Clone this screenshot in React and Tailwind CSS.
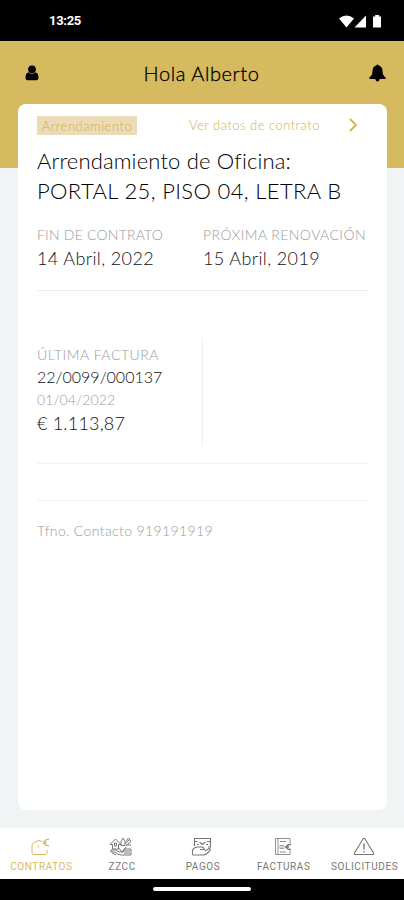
import clsx from 'clsx';

const UserIcon = () => (
    <svg width="14" height="16" viewBox="0 0 14 16" fill="currentColor">
        <circle cx="7" cy="4.300" r="3.900" />
        <path d="M3.500 7.200Q7 10.500 10.500 7.200 13.500 8 13.500 13q0 2.300-2.200 2.300H2.700Q.5 15.300.5 13 .5 8 3.500 7.200z" />
    </svg>
);

const BellIcon = () => (
    <svg width="17" height="18" viewBox="0 0 17 18" fill="currentColor">
        <path d="M7.200 1.500q1.300-2 2.600 0Q13.500 2.700 13.500 7q0 4.500 3.200 6.500.3 1.500-1 1.500h-5q-.4 2.500-2.200 2.500T6.300 15h-5q-1.300 0-1-1.500Q3.500 11.500 3.500 7q0-4.300 3.700-5.500z" />
    </svg>
);

const HouseIcon = () => (
    <svg width="22" height="20" viewBox="0 0 22 20" fill="none" stroke="currentColor" strokeWidth="1">
        <path d="M13 4.500Q10 2.500 7 4.500L3 7.500V15.500q0 2 2 2h11q2 0 2-2V13" />
        <path d="M9.500 8.500v2" />
        <path d="M20 2.500q-4-1-4.500 3 .5 4 4.500 3M14 4.700h3.500M14 6.500h3.500" strokeWidth="1.300" />
    </svg>
);

const CommunityIcon = () => (
    <svg width="22" height="20" viewBox="0 0 22 20" fill="none" stroke="currentColor" strokeWidth="1">
        <path d="M0 7.500 5.500 2 11 7.500H8.500V12h-6V7.500zM4.500 6h2v3h-2z" />
        <path d="M11 4.500 13 1l2 3.500v4h-4zM16 4.500 18.500 1 21 4.500l-5 4M15 7l5-5M17 8h4" />
        <path d="M1 13h5l3 2h4l1-3h7v6h-9q-5 0-7-3H1zM8 10l4 5 4-5M13 14h7M14 16h6M2 16l4 2" />
    </svg>
);

const PaymentIcon = () => (
    <svg width="22" height="20" viewBox="0 0 22 20" fill="none" stroke="currentColor" strokeWidth="1.100">
        <path d="M3.500 9V1.500h16V10H17M3.500 4.500h3M16 4.500h3" />
        <path d="M8.500 5l3 2.500 3-2.500M6 7.500h2M15 7.500h2" />
        <path d="M1.500 17.500V13q2-3 5-3h4q2.500 0 3 2.500H9M14 14l4-2.500q2 0 1 2l-3 3q-2 1.500-4 1.500H1.500" />
    </svg>
);

const InvoiceIcon = () => (
    <svg width="22" height="20" viewBox="0 0 22 20" fill="none" stroke="currentColor" strokeWidth="1">
        <path d="M18 6V1.500H3.500v16H18V14M6 1.500v16M8 4.500h6M8 15h6" strokeOpacity=".8" />
        <path d="M8 8.500h4v3H8zM10 8v4" strokeOpacity=".6" />
        <path d="M19 7.500q-4-.5-4.500 2.500.5 3 4.500 2.500M13 10h4" strokeWidth="1.400" />
    </svg>
);

const WarningIcon = () => (
    <svg width="22" height="20" viewBox="0 0 22 20" fill="none" stroke="currentColor" strokeWidth="1.100">
        <path d="M10 2q1-1.500 2 0l8.500 14q.5 1.500-1 1.500h-17q-1.500 0-1-1.500z" />
        <path d="M11 6.500v6M11 14v1.500" strokeWidth="1.400" />
    </svg>
);

const tabs = [
    { label: 'CONTRATOS', Icon: HouseIcon },
    { label: 'ZZCC', Icon: CommunityIcon },
    { label: 'PAGOS', Icon: PaymentIcon },
    { label: 'FACTURAS', Icon: InvoiceIcon },
    { label: 'SOLICITUDES', Icon: WarningIcon },
];

const StatusBar = () => (
    <div className="flex h-[41px] shrink-0 items-center justify-between bg-black pl-[49px] pr-[22px] text-white">
        <span className="font-['Roboto',sans-serif] text-[13px] font-bold leading-4 tracking-[-0.300px]">13:25</span>
        <svg width="43" height="14" viewBox="0 0 43 14" fill="currentColor">
            <path d="M0 4.500Q7.500-1.500 15 4.500L7.500 13.500z" />
            <path d="M27 1.500v12H15.500z" />
            <path d="M34 2.500h2.200V1h4v1.500h1.800v11h-8z" />
        </svg>
    </div>
);

const Field = ({ label, value, labelClass, valueClass = 'text-[18px] leading-6 tracking-[0.380px]' }) => (
    <div>
        <div className={clsx('text-[14px] leading-[23px] text-[#999999]', labelClass)}>{label}</div>
        <div className={valueClass}>{value}</div>
    </div>
);

const ContractCard = () => (
    <section className="ml-[18px] mr-[17px] h-[706px] rounded-lg bg-white px-[19px] pt-[11px]">
        <div className="flex h-5 items-center text-[13px] leading-5 text-[#d4b04c]">
            <span className="h-[19px] w-[100px] bg-[#ecdbb9] text-center leading-5 tracking-[0.550px]">Arrendamiento</span>
            <span className="ml-[52px] w-[132px] whitespace-nowrap tracking-[0.470px]">Ver datos de contrato</span>
            <svg className="ml-[28px]" width="8" height="14" viewBox="0 0 8 14" fill="none" stroke="currentColor" strokeWidth="1.800">
                <path d="m1 1 6 6-6 6" />
            </svg>
        </div>
        <h2 className="mt-[11px] whitespace-nowrap text-[22px] leading-[30px] text-black">
            <div className="tracking-[0.160px]">Arrendamiento de Oficina:</div>
            <div className="tracking-[0.360px]">PORTAL 25, PISO 04, LETRA B</div>
        </h2>
        <div className="mt-[17px] flex h-[68px] whitespace-nowrap border-b border-[#eeeeee]">
            <div className="w-[166px]">
                <Field label="FIN DE CONTRATO" value="14 Abril, 2022" labelClass="tracking-[0.220px]" />
            </div>
            <Field label="PRÓXIMA RENOVACIÓN" value="15 Abril, 2019" labelClass="tracking-[0.440px]" />
        </div>
        <div className="flex h-[173px] border-b border-[#f2f2f2] pt-[47px]">
            <div className="h-[108px] w-[166px] border-r border-[#eeeeee] pt-[5px]">
                <Field
                    label="ÚLTIMA FACTURA"
                    value="22/0099/000137"
                    labelClass="tracking-[0.550px]"
                    valueClass="text-[16px] leading-[22px]"
                />
                <Field
                    label="01/04/2022"
                    value="€ 1.113,87"
                    labelClass="tracking-[0.100px]"
                    valueClass="text-[18px] leading-6 tracking-[0.200px]"
                />
            </div>
        </div>
        <div className="h-[37px] border-b border-[#f2f2f2]" />
        <p className="mt-5 text-[14px] leading-5 tracking-[0.370px] text-[#999999]">Tfno. Contacto 919191919</p>
    </section>
);

const TabBar = () => (
    <nav className="grid h-[51px] shrink-0 grid-cols-5 bg-white">
        {tabs.map(({ label, Icon }, i) => (
            <div
                key={label}
                className={clsx('flex flex-col items-center pt-[9px]', i === 0 ? 'text-[#d9b85b]' : 'text-[#777777]')}
            >
                <Icon />
                <span className="mt-1 pl-[2px] font-['Roboto',sans-serif] text-[10px] font-normal leading-3 tracking-[0.600px]">
                    {label}
                </span>
            </div>
        ))}
    </nav>
);

const App = () => {
    return (
        <div className="flex h-[900px] w-[404px] flex-col overflow-hidden bg-[#f1f4f5] font-['Lato',sans-serif] font-light text-[#111111]">
            <StatusBar />
            <main className="flex-1 bg-linear-to-b from-[#d6ba60] from-[127px] to-[#f1f4f5] to-[127px]">
                <header className="flex h-[63px] items-center justify-between pl-[25px] pr-[18px] text-black">
                    <UserIcon />
                    <h1 className="mr-[5px] text-[20px] tracking-[0.600px] [-webkit-text-stroke:0.3px_black]">Hola Alberto</h1>
                    <BellIcon />
                </header>
                <ContractCard />
            </main>
            <TabBar />
            <div className="flex h-[21px] shrink-0 justify-center bg-black pt-2">
                <div className="h-1 w-[98px] rounded-full bg-white" />
            </div>
        </div>
    );
};

export default App;
